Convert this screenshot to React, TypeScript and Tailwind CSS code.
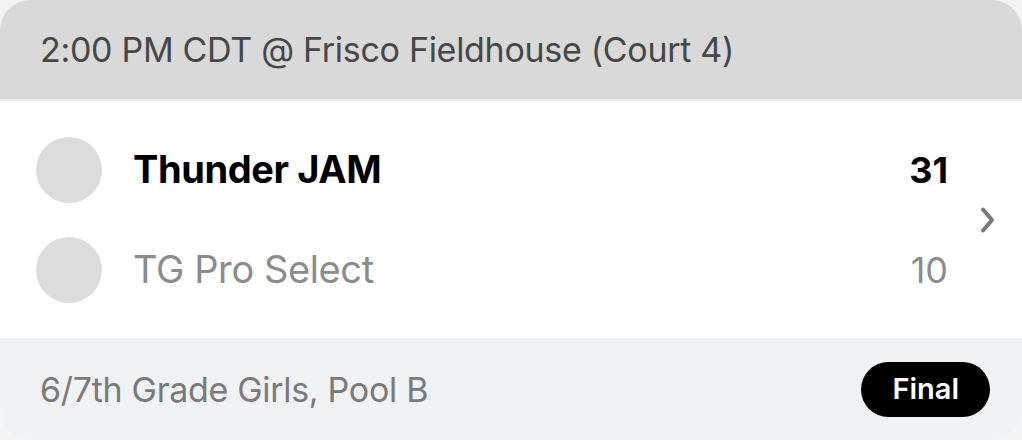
const teams = [
    { name: "Thunder JAM", score: 31, winner: true },
    { name: "TG Pro Select", score: 10, winner: false },
];

export default function App() {
    return (
        <div className="w-[1022px] h-[440px] bg-[#f4f4f4] font-['Inter',sans-serif]">
            <div className="h-full rounded-[30px] overflow-hidden flex flex-col bg-white">
                {/* Header */}
                <div className="h-[101px] bg-[#d9d9d9] flex items-center px-10 border-b-2 border-[#ececec]">
                    <span className="text-[34px] text-[#474747] tracking-[-0.3px]">
                        2:00 PM CDT @ Frisco Fieldhouse (Court 4)
                    </span>
                </div>

                {/* Teams */}
                <div className="flex-1 flex items-center pl-9 pr-6">
                    <div className="flex-1 flex flex-col gap-[34px]">
                        {teams.map((t) => (
                            <div key={t.name} className="flex items-center h-[66px]">
                                <div className="w-[66px] h-[66px] rounded-full bg-[#dcdcdc]" />
                                <span
                                    className={
                                        t.winner
                                            ? "ml-[31px] text-[38px] font-bold text-black tracking-[-0.4px]"
                                            : "ml-[31px] text-[38px] text-[#8c8c8c] tracking-[-0.4px]"
                                    }
                                >
                                    {t.name}
                                </span>
                                <span
                                    className={
                                        t.winner
                                            ? "ml-auto text-[36px] font-bold text-black"
                                            : "ml-auto text-[36px] text-[#8c8c8c]"
                                    }
                                >
                                    {t.score}
                                </span>
                            </div>
                        ))}
                    </div>
                    <svg width="18" height="28" viewBox="0 0 18 28" className="ml-[30px] mr-[2px]" fill="none">
                        <path d="M5 3.5 L14 14 L5 24.5" stroke="#7a7a7a" strokeWidth="4" strokeLinecap="round" strokeLinejoin="round" />
                    </svg>
                </div>

                {/* Footer */}
                <div className="h-[102px] bg-[#f1f2f4] flex items-center justify-between pl-10 pr-8">
                    <span className="text-[34px] text-[#7a7a7a] tracking-[-0.3px]">6/7th Grade Girls, Pool B</span>
                    <span className="bg-black text-white text-[29px] font-semibold rounded-full px-[31px] h-[55px] flex items-center">
                        Final
                    </span>
                </div>
            </div>
        </div>
    );
}
